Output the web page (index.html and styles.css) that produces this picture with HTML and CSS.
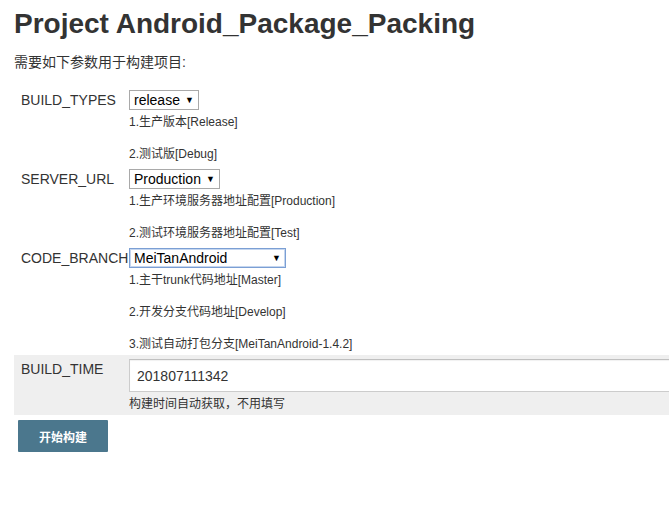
FILE: index.html
```html
<!DOCTYPE html>
<html lang="zh-CN">
<head>
<meta charset="utf-8">
<title>Project Android_Package_Packing</title>
<link rel="stylesheet" href="styles.css">
</head>
<body>
<h1 class="title">Project Android_Package_Packing</h1>
<p class="intro">需要如下参数用于构建项目:</p>
<form class="params">
  <div class="row">
    <div class="label">BUILD_TYPES</div>
    <div class="field">
      <span class="sel sel-types"><select><option>release</option></select><span class="arrow">▼</span></span>
      <div class="help first">1.生产版本[Release]</div>
      <div class="help">2.测试版[Debug]</div>
    </div>
  </div>
  <div class="row">
    <div class="label">SERVER_URL</div>
    <div class="field">
      <span class="sel sel-url"><select><option>Production</option></select><span class="arrow">▼</span></span>
      <div class="help first">1.生产环境服务器地址配置[Production]</div>
      <div class="help">2.测试环境服务器地址配置[Test]</div>
    </div>
  </div>
  <div class="row">
    <div class="label">CODE_BRANCH</div>
    <div class="field">
      <span class="sel sel-branch focused"><select><option>MeiTanAndroid</option></select><span class="arrow">▼</span></span>
      <div class="help first">1.主干trunk代码地址[Master]</div>
      <div class="help">2.开发分支代码地址[Develop]</div>
      <div class="help">3.测试自动打包分支[MeiTanAndroid-1.4.2]</div>
    </div>
  </div>
  <div class="row row-time">
    <div class="label">BUILD_TIME</div>
    <div class="field">
      <input class="text" type="text" value="201807111342">
      <div class="help first">构建时间自动获取，不用填写</div>
    </div>
  </div>
  <button class="build" type="button">开始构建</button>
</form>
</body>
</html>
```
FILE: styles.css
```css
html, body {
  margin: 0;
  padding: 0;
  background: #fff;
  overflow: hidden;
}
body {
  padding: 0 0 0 14px;
  font-family: "Liberation Sans", "Noto Sans CJK SC", sans-serif;
  color: #333;
  font-size: 14px;
}
.title {
  margin: 0;
  padding-top: 8px;
  font-size: 28px;
  line-height: 32px;
  font-weight: bold;
  color: #333;
}
.intro {
  margin: 12px 0 14px 0;
  line-height: 20px;
  font-size: 14px;
}
.params {
  display: flex;
  flex-direction: column;
  width: 720px;
}
.row {
  display: flex;
  padding: 4px 0 3px 7px;
}
.label {
  width: 108px;
  flex: none;
  line-height: 20px;
  font-size: 14px;
  white-space: nowrap;
}
.field {
  flex: 1;
  display: flex;
  flex-direction: column;
  align-items: flex-start;
}
.sel {
  position: relative;
  display: inline-flex;
  height: 20px;
  box-sizing: border-box;
  border: 1px solid #a9a9a9;
  background: #fff;
}
.sel select {
  appearance: none;
  -webkit-appearance: none;
  border: 0;
  outline: 0;
  margin: 0;
  padding: 0 0 0 4px;
  height: 18px;
  line-height: 18px;
  background: transparent;
  font-family: "Liberation Sans", sans-serif;
  font-size: 14px;
  color: #000;
}
.sel-types select { width: 68px; }
.sel-url select { width: 89px; }
.sel-branch select { width: 155px; }
.sel.focused {
  border-color: #7b9fd4;
  box-shadow: 0 0 0 1px #c5d6ef inset;
}
.arrow {
  position: absolute;
  right: 4px;
  top: 3px;
  font-size: 9px;
  line-height: 12px;
  color: #000;
  pointer-events: none;
}
.help {
  font-size: 12px;
  line-height: 16px;
  margin-top: 16px;
  white-space: nowrap;
}
.help.first {
  margin-top: 4px;
}
.row-time {
  background: #efefef;
  padding-bottom: 3px;
}
.text {
  display: block;
  box-sizing: border-box;
  width: 100%;
  height: 33px;
  margin: 0;
  padding: 0 7px;
  border: 1px solid #ccc;
  border-top-color: #c0c0c0;
  box-shadow: inset 0 1px 1px rgba(0,0,0,0.06);
  background: #fff;
  font-family: "Liberation Sans", sans-serif;
  font-size: 14px;
  color: #333;
  outline: 0;
}
.build {
  align-self: flex-start;
  margin: 5px 0 0 4px;
  width: 90px;
  height: 32px;
  border: 0;
  border-radius: 1px;
  background: #4b778d;
  color: #fff;
  font-family: "Noto Sans CJK SC", sans-serif;
  font-weight: bold;
  font-size: 12px;
  padding: 0;
}
```
